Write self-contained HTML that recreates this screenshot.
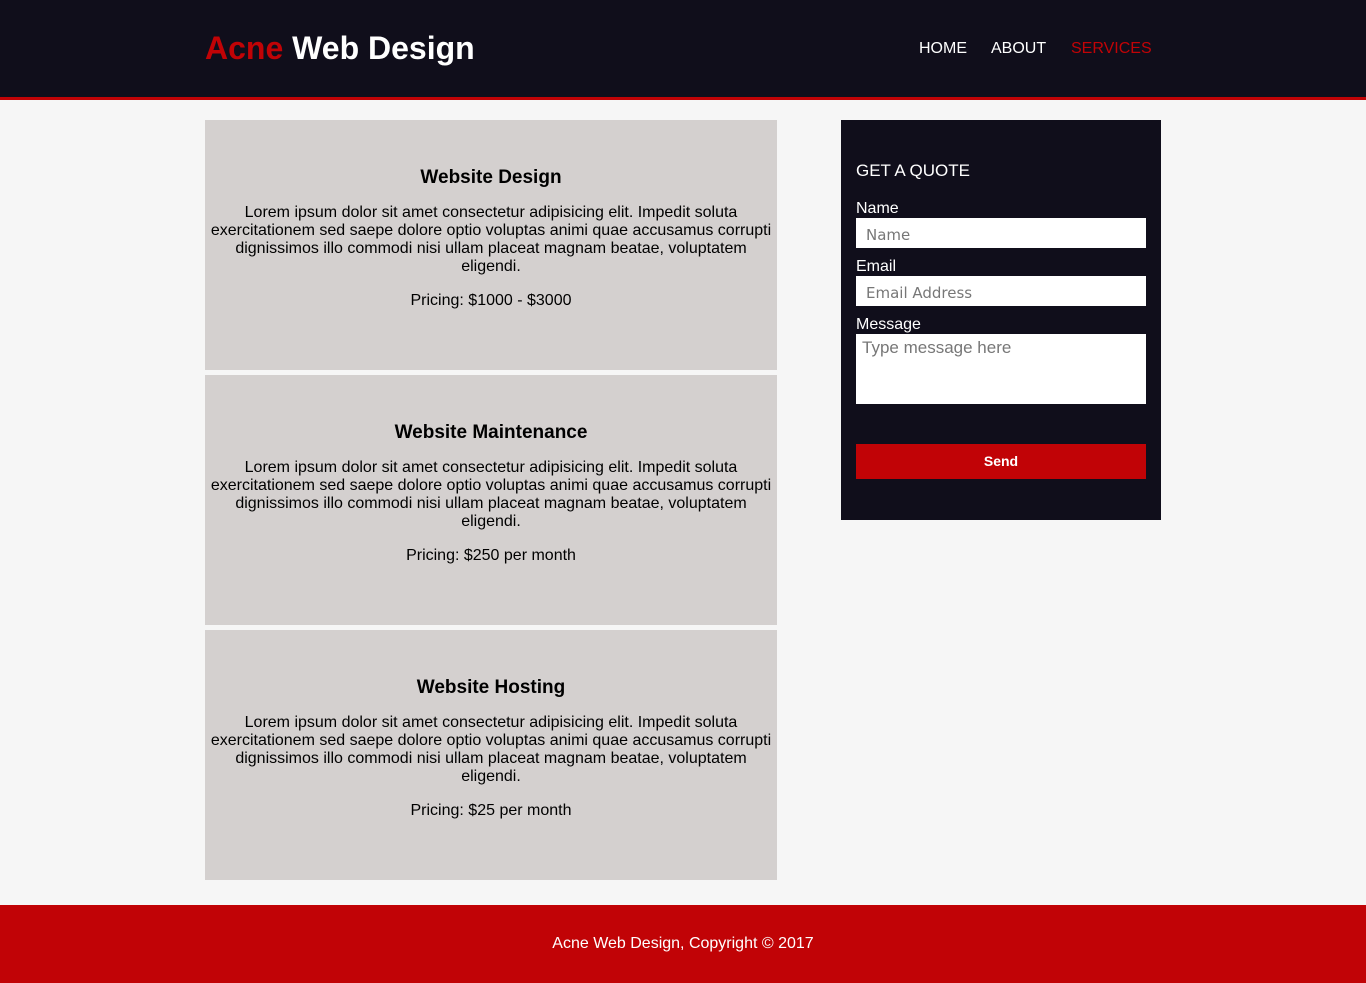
<!DOCTYPE html>
<html><head><style>
*{margin:0;padding:0;box-sizing:border-box}
body{width:1366px;height:983px;background:#f6f6f6;font-family:"Liberation Sans",Arial,sans-serif;position:relative;overflow:hidden}
header{position:absolute;left:0;top:0;width:1366px;height:100px;background:#100e1b;border-bottom:3px solid #c10306}
.logo{position:absolute;left:205px;top:29px;font-size:32px;font-weight:bold;color:#fff;line-height:38px}
.logo span{color:#c10306}
nav{position:absolute;top:40px;left:0;width:1366px;font-size:16px;line-height:18px}
nav a{position:absolute;color:#fff;text-decoration:none}
.box{position:absolute;left:205px;width:572px;height:250px;background:#d4d0cf;text-align:center;color:#000;padding:0 5px}
.box h3{font-size:19px;line-height:22px;margin-top:47px;margin-bottom:15px}
.box p{font-size:16px;line-height:18px}
.box p.pr{margin-top:16px}
.quote{position:absolute;left:841px;top:120px;width:320px;height:400px;background:#100e1b;color:#fff}
.quote .t{position:absolute;left:15px;top:41px;font-size:17px;line-height:20px}
.lbl{position:absolute;left:15px;font-size:16px;line-height:18px}
.inp{position:absolute;left:15px;width:290px;height:30px;background:#fff;color:#777;line-height:34px;padding-left:10px;font-family:"DejaVu Sans",sans-serif;font-size:15px}
.btn{position:absolute;left:15px;top:324px;width:290px;height:35px;background:#c10306;color:#fff;font-size:14px;font-weight:bold;text-align:center;line-height:35px}
footer{position:absolute;left:0;top:905px;width:1366px;height:78px;background:#c10306;color:#fff;text-align:center;font-size:16px;line-height:78px}
</style></head><body>
<header>
<div class="logo"><span>Acne</span> Web Design</div>
<nav><a style="left:919px">HOME</a><a style="left:991px">ABOUT</a><a style="left:1071px;color:#c10306">SERVICES</a></nav>
</header>
<div class="box" style="top:120px"><h3>Website Design</h3><p>Lorem ipsum dolor sit amet consectetur adipisicing elit. Impedit soluta exercitationem sed saepe dolore optio voluptas animi quae accusamus corrupti dignissimos illo commodi nisi ullam placeat magnam beatae, voluptatem eligendi.</p><p class="pr">Pricing: $1000 - $3000</p></div>
<div class="box" style="top:375px"><h3>Website Maintenance</h3><p>Lorem ipsum dolor sit amet consectetur adipisicing elit. Impedit soluta exercitationem sed saepe dolore optio voluptas animi quae accusamus corrupti dignissimos illo commodi nisi ullam placeat magnam beatae, voluptatem eligendi.</p><p class="pr">Pricing: $250 per month</p></div>
<div class="box" style="top:630px"><h3>Website Hosting</h3><p>Lorem ipsum dolor sit amet consectetur adipisicing elit. Impedit soluta exercitationem sed saepe dolore optio voluptas animi quae accusamus corrupti dignissimos illo commodi nisi ullam placeat magnam beatae, voluptatem eligendi.</p><p class="pr">Pricing: $25 per month</p></div>
<div class="quote">
<div class="t">GET A QUOTE</div>
<div class="lbl" style="top:80px">Name</div>
<div class="inp" style="top:98px">Name</div>
<div class="lbl" style="top:138px">Email</div>
<div class="inp" style="top:156px">Email Address</div>
<div class="lbl" style="top:196px">Message</div>
<div class="inp" style="top:214px;height:70px;line-height:27px;padding-left:6px;font-family:'Liberation Sans',sans-serif;font-size:17px">Type message here</div>
<div class="btn">Send</div>
</div>
<footer>Acne Web Design, Copyright © 2017</footer>
</body></html>
